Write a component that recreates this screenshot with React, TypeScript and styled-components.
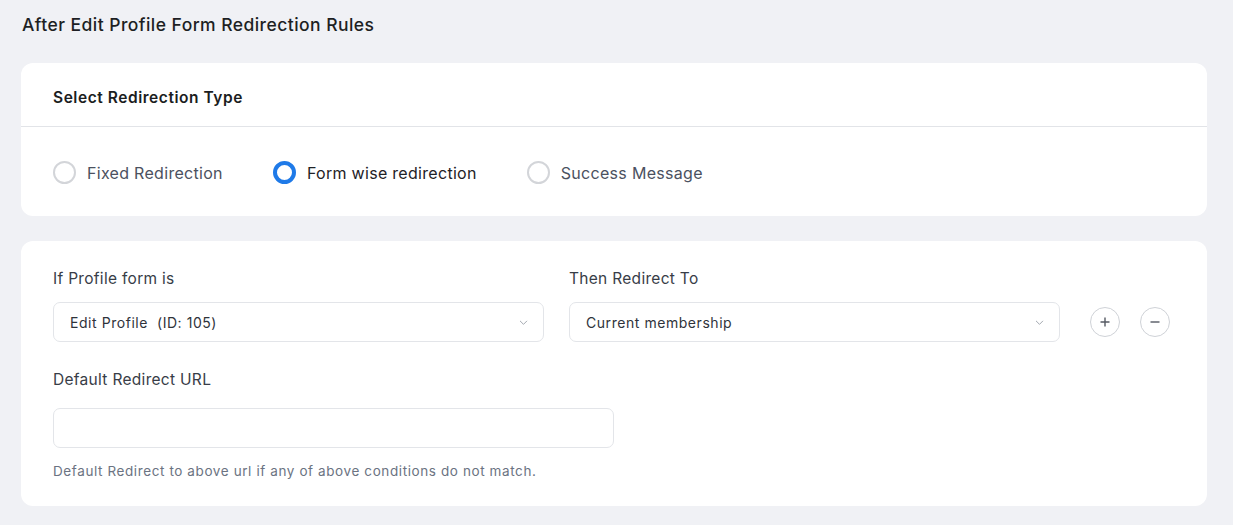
import React, { useState } from 'react'
import styled, { createGlobalStyle } from 'styled-components'

const GlobalStyle = createGlobalStyle`
	html, body {
		margin: 0;
		padding: 0;
		background: #f0f1f5;
	}
	body {
		font-family: Inter, 'Noto Sans', sans-serif;
		color: #1f2125;
	}
	* {
		box-sizing: border-box;
	}
`

const Page = styled.div`
	padding: 14px 26px 20px 21px;
	display: flex;
	flex-direction: column;
	gap: 25px;
`

const PageTitle = styled.h1`
	margin: 0 0 2px 1px;
	font-size: 17.5px;
	letter-spacing: 0.45px;
	line-height: 22px;
	font-weight: 500;
	color: #1d1f23;
`

const Card = styled.section`
	background: #ffffff;
	border-radius: 12px;
`

const CardHeader = styled.div`
	padding: 6px 32px 0;
	height: 64px;
	display: flex;
	align-items: center;
	border-bottom: 1px solid #e2e4e8;
	font-size: 15.5px;
	letter-spacing: 0.55px;
	font-weight: 600;
	color: #1b1d21;
`

const RadioRow = styled.div`
	display: flex;
	align-items: center;
	gap: 50px;
	padding: 2px 32px 0;
	height: 89px;
`

const RadioOption = styled.label<{ $checked: boolean }>`
	display: flex;
	align-items: center;
	gap: 11px;
	cursor: pointer;
	font-size: 16px;
	letter-spacing: 0.3px;
	color: ${(p) => (p.$checked ? '#1f2227' : '#4b5160')};
`

const RadioCircle = styled.span<{ $checked: boolean }>`
	width: 23px;
	height: 23px;
	border-radius: 50%;
	border: ${(p) => (p.$checked ? '4px solid #1f7ae8' : '2px solid #d3d5d9')};
	background: #fff;
	flex-shrink: 0;
`

const FormBody = styled.div`
	padding: 26px 32px 27px;
`

const RuleGrid = styled.div`
	display: grid;
	grid-template-columns: 491px 491px auto;
	column-gap: 25px;
	align-items: end;
`

const Field = styled.div`
	display: flex;
	flex-direction: column;
`

const Label = styled.div<{ $gap?: number }>`
	font-size: 15.5px;
	letter-spacing: 0.3px;
	line-height: 24px;
	color: #383d47;
	margin-bottom: ${(p) => p.$gap ?? 11}px;
`

const SelectBox = styled.div`
	height: 40px;
	border: 1px solid #e3e5e9;
	border-radius: 7px;
	display: flex;
	align-items: center;
	justify-content: space-between;
	padding: 0 14px 0 16px;
	font-size: 14px;
	letter-spacing: 0.55px;
	color: #2f333b;
`

const Chevron = () => (
	<svg width="11" height="11" viewBox="0 0 24 24" fill="none" stroke="#9aa0a8" strokeWidth="2" strokeLinecap="round" strokeLinejoin="round">
		<path d="M5 9l7 7 7-7" />
	</svg>
)

const RowActions = styled.div`
	display: flex;
	gap: 20px;
	height: 40px;
	align-items: center;
	padding-left: 5px;
`

const CircleButton = styled.button`
	width: 30px;
	height: 30px;
	border-radius: 50%;
	border: 1px solid #cfd2d7;
	background: #fff;
	padding: 0;
	display: flex;
	align-items: center;
	justify-content: center;
	cursor: pointer;
`

const UrlField = styled(Field)`
	margin-top: 26px;
	width: 561px;
`

const TextInput = styled.input`
	height: 40px;
	border: 1px solid #e3e5e9;
	border-radius: 7px;
	margin-top: 4px;
	padding: 0 16px;
	font-size: 14px;
	outline: none;
`

const Help = styled.p`
	margin: 15px 0 0;
	font-size: 13.5px;
	letter-spacing: 0.6px;
	color: #6b7382;
`

const options = ['Fixed Redirection', 'Form wise redirection', 'Success Message']

const App: React.FC = () => {
	const [type, setType] = useState(1)
	return (
		<Page>
			<GlobalStyle />
			<PageTitle>After Edit Profile Form Redirection Rules</PageTitle>

			<Card>
				<CardHeader>Select Redirection Type</CardHeader>
				<RadioRow>
					{options.map((o, i) => (
						<RadioOption key={o} $checked={type === i} onClick={() => setType(i)}>
							<RadioCircle $checked={type === i} />
							{o}
						</RadioOption>
					))}
				</RadioRow>
			</Card>

			<Card>
				<FormBody>
					<RuleGrid>
						<Field>
							<Label>If Profile form is</Label>
							<SelectBox>
								<span>Edit Profile&nbsp;&nbsp;(ID: 105)</span>
								<Chevron />
							</SelectBox>
						</Field>
						<Field>
							<Label>Then Redirect To</Label>
							<SelectBox>
								<span>Current membership</span>
								<Chevron />
							</SelectBox>
						</Field>
						<RowActions>
							<CircleButton aria-label="add">
								<svg width="10" height="10" viewBox="0 0 10 10" stroke="#555a63" strokeWidth="1.4">
									<path d="M5 0.5v9M0.5 5h9" />
								</svg>
							</CircleButton>
							<CircleButton aria-label="remove">
								<svg width="10" height="10" viewBox="0 0 10 10" stroke="#555a63" strokeWidth="1.4">
									<path d="M0.5 5h9" />
								</svg>
							</CircleButton>
						</RowActions>
					</RuleGrid>

					<UrlField>
						<Label $gap={12}>Default Redirect URL</Label>
						<TextInput />
					</UrlField>
					<Help>Default Redirect to above url if any of above conditions do not match.</Help>
				</FormBody>
			</Card>
		</Page>
	)
}

export default App
